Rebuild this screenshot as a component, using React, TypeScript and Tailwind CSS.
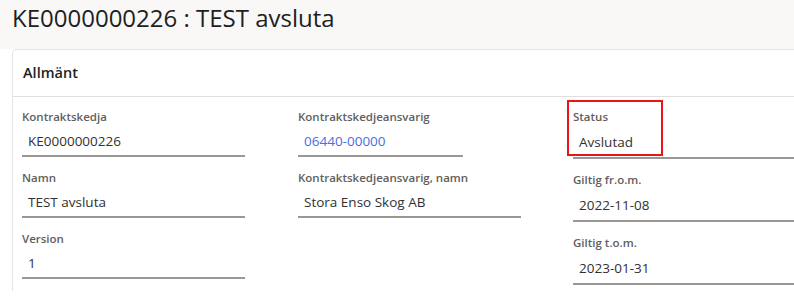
import React from 'react';

interface Field {
  label: string;
  value: string;
  width: string;
  link?: boolean;
  marked?: boolean;
}

const columnOne: Field[] = [
  { label: 'Kontraktskedja', value: 'KE0000000226', width: 'w-[223px]' },
  { label: 'Namn', value: 'TEST avsluta', width: 'w-[223px]' },
  { label: 'Version', value: '1', width: 'w-[223px]' },
];

const columnTwo: Field[] = [
  { label: 'Kontraktskedjeansvarig', value: '06440-00000', width: 'w-[165px]', link: true },
  { label: 'Kontraktskedjeansvarig, namn', value: 'Stora Enso Skog AB', width: 'w-[223px]' },
];

const columnThree: Field[] = [
  { label: 'Status', value: 'Avslutad', width: 'w-[260px]', marked: true },
  { label: 'Giltig fr.o.m.', value: '2022-11-08', width: 'w-[260px]' },
  { label: 'Giltig t.o.m.', value: '2023-01-31', width: 'w-[260px]' },
];

function ReadOnlyField({ field, tall }: { field: Field; tall?: boolean }) {
  return (
    <div className={`relative ${field.width}`}>
      {field.marked && (
        <div className="absolute left-[-6px] top-[-9px] w-[96px] h-[56px] border-2 border-[#e8141c]" />
      )}
      <div className="h-[16px] leading-[16px] text-[11.5px] font-semibold text-[#605e5c] whitespace-nowrap">
        {field.label}
      </div>
      <div
        className={`${tall ? 'h-[34px] pt-[4px]' : 'h-[32px] pt-[3px]'} px-[6px] border-b-2 border-[#9a9896] text-[13.5px] leading-[26px] whitespace-nowrap ${
          field.link ? 'text-[#4a6ee0]' : 'text-[#323130]'
        }`}
      >
        {field.value}
      </div>
    </div>
  );
}

export default function App() {
  return (
    <div className="w-[794px] h-[302px] overflow-hidden bg-white font-['Open_Sans',sans-serif]">
      <div className="h-[49px] bg-[#f9f8f7] pl-[12px] pt-[1px]">
        <h1 className="text-[24px] leading-[34px] text-[#201f1e]">KE0000000226 : TEST avsluta</h1>
      </div>
      <div className="ml-[12px] h-[242px] w-[800px] bg-white border-t border-l border-[#e6e4e2] rounded-tl-[5px]">
        <div className="h-[47px] flex items-center pl-[10px] border-b border-[#e1dfdd]">
          <span className="text-[14.5px] font-semibold text-[#201f1e]">Allmänt</span>
        </div>
        <div className="grid grid-cols-[276px_275px_1fr] pl-[9px] pt-[12px]">
          <div className="flex flex-col gap-[13px]">
            {columnOne.map(f => (
              <ReadOnlyField key={f.label} field={f} />
            ))}
          </div>
          <div className="flex flex-col gap-[13px]">
            {columnTwo.map(f => (
              <ReadOnlyField key={f.label} field={f} />
            ))}
          </div>
          <div className="flex flex-col gap-[13px]">
            {columnThree.map(f => (
              <ReadOnlyField key={f.label} field={f} tall />
            ))}
          </div>
        </div>
      </div>
    </div>
  );
}
